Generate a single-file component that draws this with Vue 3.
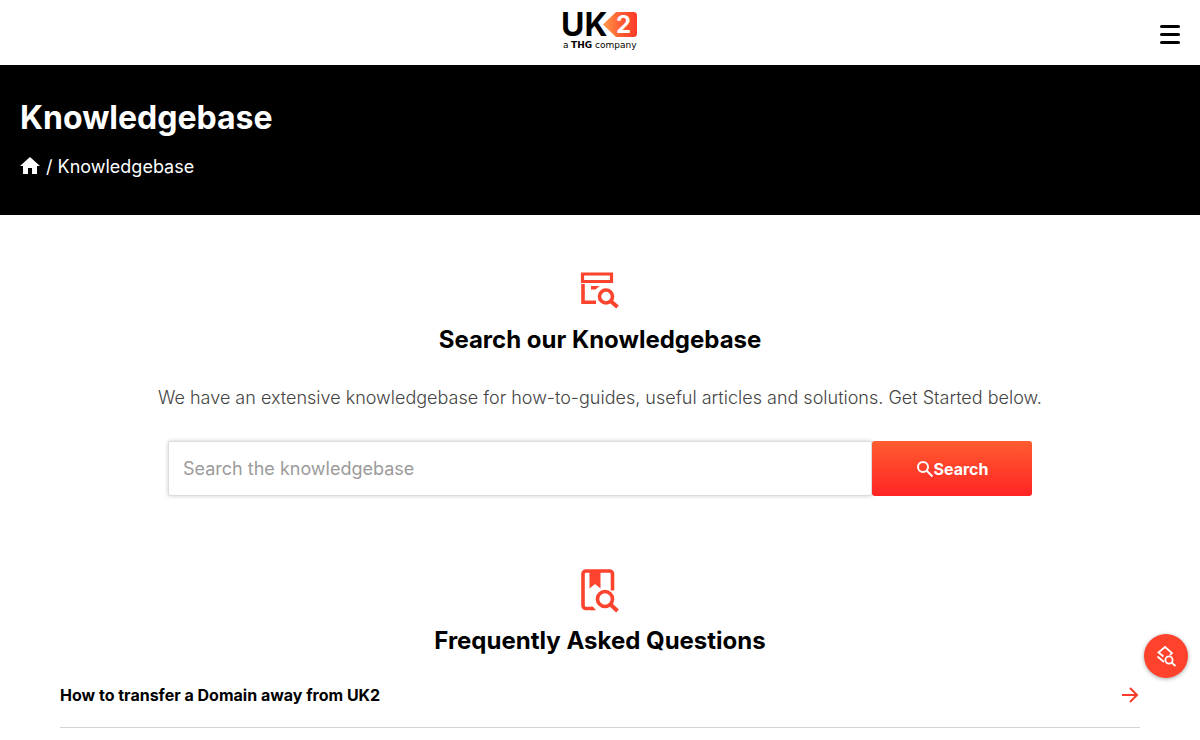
<script setup>
import { ref } from 'vue'

const query = ref('')
const faqs = ref([{ id: 1, title: 'How to transfer a Domain away from UK2' }])
</script>

<template>
  <div class="page">
    <header class="topbar">
      <a class="logo" href="#" aria-label="UK2, a THG company">
        <svg width="76" height="42" viewBox="0 0 76 42" overflow="visible">
          <defs>
            <linearGradient id="logo-fill" x1="0" y1="0" x2="1" y2="0">
              <stop offset="0" stop-color="#ff9a4a" />
              <stop offset="0.55" stop-color="#ff5a30" />
              <stop offset="1" stop-color="#fb3a28" />
            </linearGradient>
          </defs>
          <text class="logo-name" x="-1" y="26">UK</text>
          <path d="M41 14.500 54 2H71.500A3.500 3.500 0 0 1 75 5.500V23.500A3.500 3.500 0 0 1 71.500 27H54Z" fill="url(#logo-fill)" />
          <text class="logo-digit" x="54" y="23">2</text>
          <text class="logo-tag" x="1" y="38">a</text>
          <text class="logo-tag logo-thg" x="9" y="38">THG</text>
          <text class="logo-tag" x="33" y="38">company</text>
        </svg>
      </a>
      <button class="menu" type="button" aria-label="Menu">
        <span></span><span></span><span></span>
      </button>
    </header>

    <section class="banner">
      <h1>Knowledgebase</h1>
      <nav class="crumbs" aria-label="Breadcrumb">
        <a href="#" aria-label="Home">
          <svg width="20" height="20" viewBox="0 0 20 20">
            <path d="M8 17V11h4v6h5V9h3L10 0 0 9h3v8z" fill="#fff" />
          </svg>
        </a>
        <span>/ Knowledgebase</span>
      </nav>
    </section>

    <main>
      <section class="search">
        <svg width="40" height="40" viewBox="0 0 40 40" fill="none" stroke="#fc432e">
          <path d="M2.500 4h29v7.500h-29z" stroke-width="3.200" />
          <path d="M3 14v18.300h13" stroke-width="3.600" />
          <path d="M11 16h8.500l-4 3.500h-4.500z" fill="#fc432e" stroke="none" />
          <circle cx="26" cy="26.500" r="6.500" stroke-width="3.600" />
          <path d="M30.500 31l7 6" stroke-width="4" />
        </svg>
        <h2>Search our Knowledgebase</h2>
        <p>We have an extensive knowledgebase for how-to-guides, useful articles and solutions. Get Started below.</p>
        <form class="search-form" @submit.prevent>
          <input v-model="query" type="text" placeholder="Search the knowledgebase" aria-label="Search the knowledgebase" />
          <button type="submit">
            <svg width="18" height="18" viewBox="0 0 18 18" fill="none" stroke="#fff" stroke-width="2">
              <circle cx="7" cy="7" r="5" />
              <path d="M10.500 10.500l6 6" />
            </svg>
            <span>Search</span>
          </button>
        </form>
      </section>

      <section class="faq">
        <svg width="40" height="46" viewBox="0 0 40 46" fill="none" stroke="#fc432e">
          <path d="M12.500 40.500H6a3 3 0 0 1-3-3V6a3 3 0 0 1 3-3h23.500a3 3 0 0 1 3 3v16.500" stroke-width="3.600" />
          <path d="M11 38.700h2l3 3.600h-5z" fill="#fc432e" stroke="none" />
          <path d="M9.500 3h11v17.500l-5.500-4.500-5.500 4.500z" fill="#fc432e" stroke="none" />
          <circle cx="25" cy="31" r="7.500" stroke-width="3.600" />
          <path d="M30.500 36.500l7 6.500" stroke-width="4" />
        </svg>
        <h2>Frequently Asked Questions</h2>
        <ul>
          <li v-for="faq in faqs" :key="faq.id">
            <a href="#">
              <span>{{ faq.title }}</span>
              <svg width="20" height="18" viewBox="0 0 20 18" fill="none" stroke="#fc3a2c" stroke-width="2">
                <path d="M2 9h15M10 2l7 7-7 7" />
              </svg>
            </a>
          </li>
        </ul>
      </section>
    </main>

    <button class="floating" type="button" aria-label="Find a domain">
      <svg width="22" height="22" viewBox="0 0 22 22" fill="none" stroke="#fff" stroke-width="1.800">
        <path d="M8.500 11.500L3.500 7.500 10 2l7 6-2 2" />
        <path d="M2.500 11.500l6.500 5.500" />
        <circle cx="14" cy="15" r="3.600" />
        <path d="M16.500 17.500l4 3.500" />
      </svg>
    </button>
  </div>
</template>

<style>
body {
  background: #fff;
}
</style>

<style scoped>
.page {
  font-family: Inter, 'Liberation Sans', sans-serif;
  color: #000;
}
.page * {
  box-sizing: border-box;
}
svg {
  display: block;
  flex: none;
}
.topbar {
  display: grid;
  grid-template-columns: 1fr auto 1fr;
  align-items: center;
  height: 65px;
  padding: 0 20px;
}
.logo {
  grid-column: 2;
  margin-bottom: 4px;
  color: #000;
}
.logo-name {
  font-size: 32px;
  font-weight: 650;
}
.logo-digit {
  font-size: 24px;
  font-weight: 700;
  fill: #fff;
}
.logo-tag {
  font-family: 'DejaVu Sans', sans-serif;
  font-size: 9px;
}
.logo-thg {
  font-weight: 700;
}
.menu {
  display: flex;
  flex-direction: column;
  justify-self: end;
  gap: 5px;
  width: 20px;
  margin-top: 4px;
  padding: 0;
  border: 0;
  background: none;
}
.menu span {
  height: 3px;
  border-radius: 2px;
  background: #000;
}
.banner {
  padding: 33px 20px 36px;
  background: #000;
  color: #fff;
}
h1 {
  margin: 0;
  font-size: 32px;
  line-height: 40px;
  font-weight: 700;
}
.crumbs {
  display: flex;
  align-items: center;
  gap: 6px;
  margin-top: 17px;
  font-size: 18px;
  line-height: 24px;
}
.search {
  display: flex;
  flex-direction: column;
  align-items: center;
  padding: 55px 20px 0;
}
h2 {
  margin: 0;
  font-size: 24px;
  line-height: 32px;
  font-weight: 650;
  text-align: center;
}
.search h2 {
  margin-top: 14px;
}
.search p {
  margin: 27px 0 28px;
  font-size: 18px;
  line-height: 30px;
  font-weight: 300;
  color: #444;
  text-align: center;
}
.search-form {
  display: flex;
  width: 100%;
  max-width: 864px;
  height: 55px;
}
.search-form input {
  flex: 1;
  min-width: 0;
  padding: 0 14px;
  border: 1px solid #ddd;
  border-radius: 2px;
  box-shadow: 0 0 4px rgba(0, 0, 0, 0.2);
  font: 400 18px Inter, 'Liberation Sans', sans-serif;
}
.search-form input::placeholder {
  color: #9b9b9b;
}
.search-form button {
  position: relative;
  display: flex;
  align-items: center;
  justify-content: center;
  width: 160px;
  border: 0;
  border-radius: 3px;
  background: linear-gradient(#ff5c30, #ff2424);
  color: #fff;
  font: 650 16px Inter, 'Liberation Sans', sans-serif;
}
.faq {
  display: flex;
  flex-direction: column;
  align-items: center;
  padding: 72px 60px 0;
}
.faq h2 {
  margin-top: 11px;
}
.faq ul {
  width: 100%;
  margin: 6px 0 0;
  padding: 0;
  list-style: none;
}
.faq li {
  border-bottom: 1px solid #d3d3d3;
}
.faq li a {
  display: flex;
  align-items: center;
  justify-content: space-between;
  height: 64px;
  color: #000;
  font-size: 16px;
  line-height: 24px;
  font-weight: 650;
  text-decoration: none;
}
.floating {
  position: fixed;
  right: 12px;
  bottom: 62px;
  display: flex;
  align-items: center;
  justify-content: center;
  width: 44px;
  height: 44px;
  padding: 0;
  border: 0;
  border-radius: 50%;
  background: #ff422c;
  box-shadow: 0 1px 4px rgba(0, 0, 0, 0.35);
}
</style>
